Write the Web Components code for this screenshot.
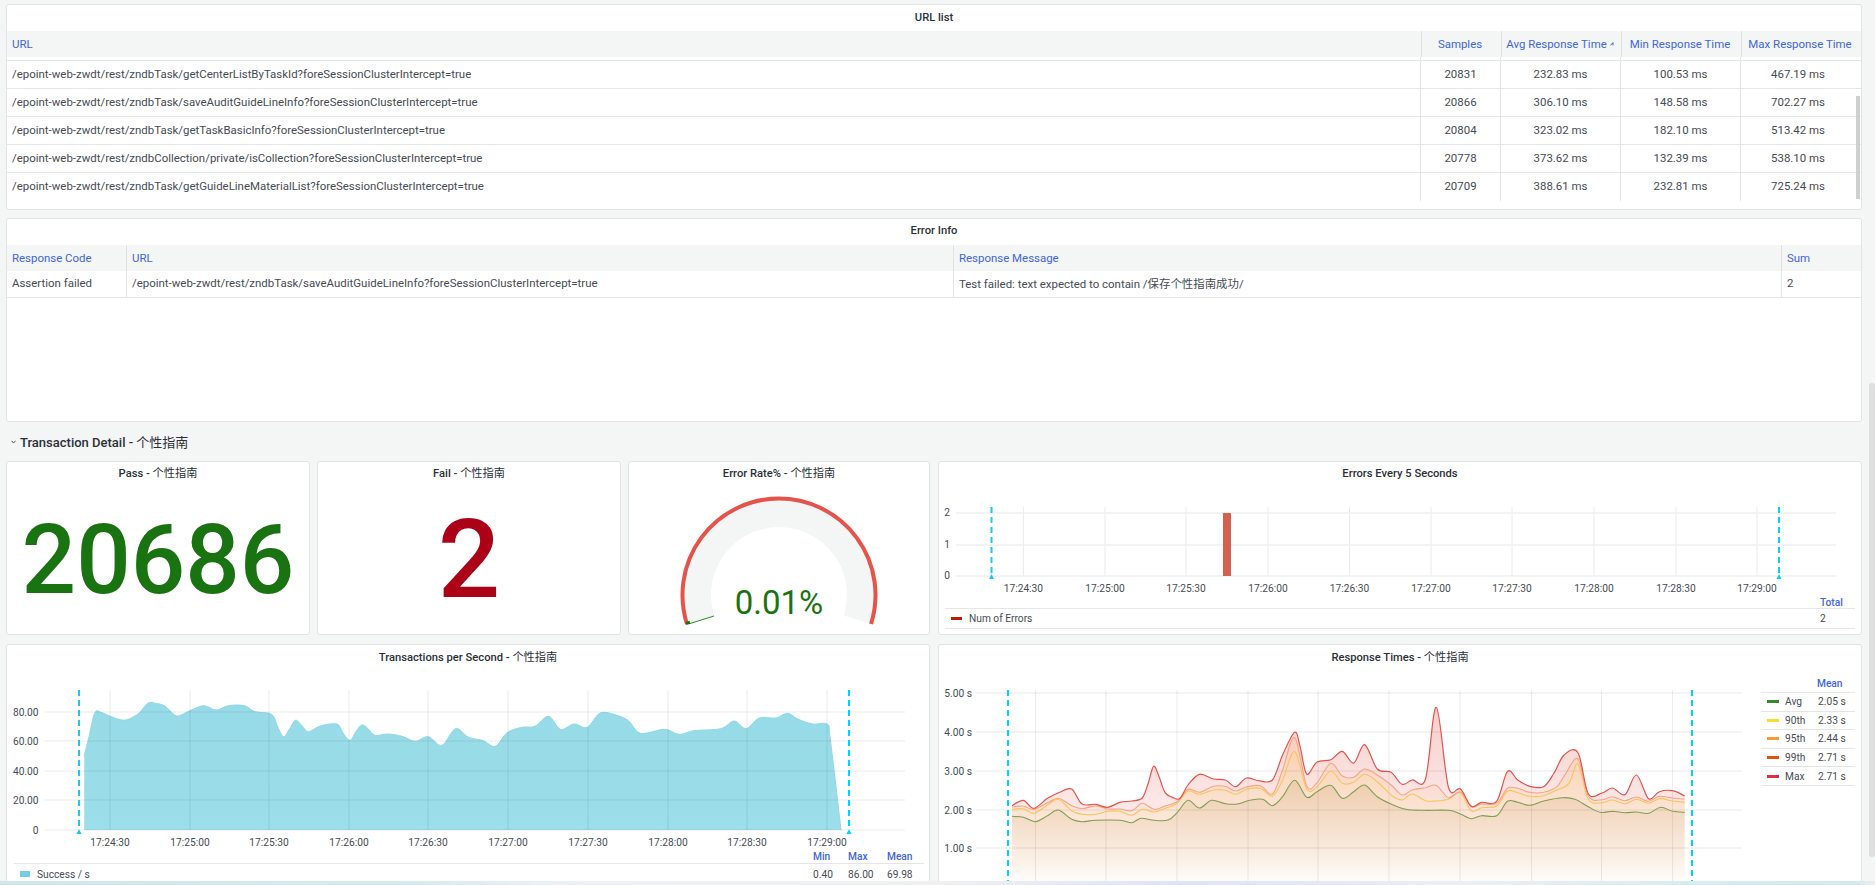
<!DOCTYPE html>
<html lang="en">
<head>
<meta charset="utf-8">
<title>Transaction Detail</title>
<style>
html,body{margin:0;padding:0;height:885px;overflow:hidden;background:#f4f5f5}
body{font-family:Roboto,"Noto Sans CJK SC",sans-serif}
</style>
</head>
<body>
<x-dashboard></x-dashboard>
<script>
const FONT='Roboto,"Noto Sans CJK SC",sans-serif';
const LINK='#3f66e2', TXT='#464c54', LINE='#e3e5e6';
function mount(el,html){const r=el.attachShadow({mode:'open'});r.innerHTML=html;return r;}
function smooth(p){
  let d=`M${p[0][0].toFixed(1)} ${p[0][1].toFixed(1)}`;
  for(let i=0;i<p.length-1;i++){
    const a=p[i-1]||p[i],b=p[i],c=p[i+1],e=p[i+2]||c;
    const c1=[b[0]+(c[0]-a[0])/6,b[1]+(c[1]-a[1])/6],c2=[c[0]-(e[0]-b[0])/6,c[1]-(e[1]-b[1])/6];
    d+=`C${c1[0].toFixed(1)} ${c1[1].toFixed(1)} ${c2[0].toFixed(1)} ${c2[1].toFixed(1)} ${c[0].toFixed(1)} ${c[1].toFixed(1)}`;
  }
  return d;
}
function pts(str,ox,sx){
  return str.trim().split(/\s*;\s*/).map(s=>{const [x,y]=s.split(',').map(Number);return [ox+x/sx,640+y/3];});
}
function area(p,base){return smooth(p)+`L${p[p.length-1][0].toFixed(1)} ${base}L${p[0][0].toFixed(1)} ${base}Z`;}
const TIMES=['17:24:30','17:25:00','17:25:30','17:26:00','17:26:30','17:27:00','17:27:30','17:28:00','17:28:30','17:29:00'];
const svgStyle=`svg{display:block}text{font:10.2px ${FONT};fill:${TXT}}`;
function dash(x,y1,y2,tri){
  return `<line x1="${x}" x2="${x}" y1="${y1}" y2="${y2}" stroke="#00d3ff" stroke-width="2" stroke-dasharray="6 4"/>`+
   (tri?`<path d="M${x-2.5} ${y2+5}L${x} ${y2}L${x+2.5} ${y2+5}Z" fill="#00d3ff"/>`:'');
}

class XPanel extends HTMLElement{
  connectedCallback(){
    if(this.shadowRoot)return;
    const t=(this.getAttribute('heading')||'').replace(/([\u4e00-\u9fff]+)/g,'<span>$1</span>');
    mount(this,`<style>
      :host{display:flex;flex-direction:column;box-sizing:border-box;background:#fff;border:1px solid #e1e3e4;border-radius:3px;overflow:hidden;min-width:0;position:relative;font-family:${FONT}}
      header{flex:none;height:var(--title-h,26px);box-sizing:border-box;padding-top:var(--title-pad,0);line-height:24px;text-align:center;font-size:11.2px;font-weight:500;color:#2b3038;white-space:nowrap}
      header span{font-weight:400}
      .b{flex:1;min-height:0;display:flex;flex-direction:column}
    </style><header>${t}</header><div class="b"><slot></slot></div>`);
  }
}
customElements.define('x-panel',XPanel);

class XTable extends HTMLElement{
  connectedCallback(){
    if(this.shadowRoot)return;
    const d=JSON.parse(this.getAttribute('data'));
    const cell=(t,c)=>`<div class="c ${c}">${t}</div>`;
    const arrow=`<svg width="4" height="4" viewBox="0 0 4 4" style="margin-left:3px;vertical-align:3px"><path d="M.4 3.4L3 .6V3.4" fill="none" stroke="${LINK}"/></svg>`;
    let h=`<div class="row head" style="grid-template-columns:${d.cols}">`+d.head.map((t,i)=>cell(t+(d.sort===i?arrow:''),d.center&&i>0?'m':'')).join('')+`</div>`;
    let b='';
    if(d.spacer)b+=`<div class="row sp" style="grid-template-columns:${d.bodyCols}">`+d.head.map(()=>`<div class="c"></div>`).join('')+`</div>`;
    d.rows.forEach((r,n)=>{
      b+=`<div class="row tr ${n===d.rows.length-1&&d.spacer?'last':''}" style="grid-template-columns:${d.bodyCols};height:${d.rowH}px">`+r.map((t,i)=>cell(t,d.center&&i>0?'m':'')).join('')+`</div>`;
    });
    mount(this,`<style>
      :host{display:block;position:relative;font-size:11.45px;color:${TXT};font-family:${FONT}}
      .row{display:grid}
      .c{box-sizing:border-box;padding:0 5px;white-space:nowrap;overflow:hidden;display:flex;align-items:center;height:100%}
      .c+.c{border-left:1px solid ${LINE}}
      .m{justify-content:center;padding:0 1px}
      .head{height:26px;background:#f4f5f5;color:${LINK}}
      .head .c{padding-bottom:1px}
      .head .m{padding-right:4px}
      .head .c+.c{border-left-color:#dfe1e2}
      .sp{height:3px;border-bottom:1px solid ${LINE}}
      .tr{box-sizing:border-box;border-bottom:1px solid ${LINE}}
      .tr .c{padding-bottom:2px}
      .last{border-bottom:0}
      .bar{position:absolute;right:1px;top:65px;width:4px;height:103px;background:#cfcfcf}
    </style>${h}${b}${d.spacer?'<div class="bar"></div>':''}`);
  }
}
customElements.define('x-table',XTable);

class XStat extends HTMLElement{
  connectedCallback(){
    if(this.shadowRoot)return;
    mount(this,`<style>
      :host{display:flex;flex:1;align-items:center;justify-content:center;font-family:${FONT};font-weight:500;line-height:1;
        font-size:${this.getAttribute('size')}px;color:${this.getAttribute('color')}}
    </style><slot></slot>`);
  }
}
customElements.define('x-stat',XStat);

class XGauge extends HTMLElement{
  connectedCallback(){
    if(this.shadowRoot)return;
    const cx=779,cy=595,a=17.5*Math.PI/180;
    const arc=r=>{const dx=r*Math.cos(a),dy=r*Math.sin(a);return `M${cx-dx} ${cy+dy}A${r} ${r} 0 1 1 ${cx+dx} ${cy+dy}`;};
    mount(this,`<style>:host{display:block}svg{display:block}text{font:33px ${FONT};fill:#1a7311}</style>
    <svg width="300" height="148" viewBox="629 486 300 148">
      <path d="${arc(82)}" fill="none" stroke="#f4f5f5" stroke-width="28"/>
      <path d="${arc(96.5)}" fill="none" stroke="#e5534b" stroke-width="4"/>
      <path d="M${cx-96.5*Math.cos(a)-1.5} ${cy+96.5*Math.sin(a)-2}l4 -1.2l1 3l-4 1.2z" fill="#1a7311"/>
      <line x1="690" y1="623.5" x2="714" y2="616" stroke="#2d8a22" stroke-width="1"/>
      <text x="779" y="614" text-anchor="middle">0.01%</text>
    </svg>`);
  }
}
customElements.define('x-gauge',XGauge);

class XLegend extends HTMLElement{
  connectedCallback(){
    if(this.shadowRoot)return;
    const d=JSON.parse(this.getAttribute('data'));
    const vals=d.values.map(v=>`<span>${v}</span>`).join('');
    const hd=d.head.map(v=>`<span>${v}</span>`).join('');
    mount(this,`<style>
      :host{display:block;padding:0 ${d.padR}px 0 ${d.padL}px;font:10.2px ${FONT};color:${TXT}}
      .r{display:grid;grid-template-columns:1fr ${d.cols};align-items:center;box-sizing:border-box}
      .h{height:${d.headH}px;color:${LINK};border-bottom:1px solid ${LINE};font-weight:500;padding-top:2px}
      .v{height:${d.rowH}px;${d.closed?`border-bottom:1px solid ${LINE};`:''}}
      .n{display:flex;align-items:center;gap:7px;padding-left:6px}
      i{display:block;width:${d.sw[0]}px;height:${d.sw[1]}px;background:${d.color}}
    </style>
    <div class="r h"><span></span>${hd}</div>
    <div class="r v"><span class="n"><i></i>${d.name}</span>${vals}</div>`);
  }
}
customElements.define('x-legend',XLegend);

class XSideLegend extends HTMLElement{
  connectedCallback(){
    if(this.shadowRoot)return;
    const d=JSON.parse(this.getAttribute('data'));
    const rows=d.map(r=>`<div class="r"><i style="background:${r[1]}"></i><span>${r[0]}</span><span>${r[2]}</span></div>`).join('');
    mount(this,`<style>
      :host{display:block;flex:none;width:94px;margin-left:6px;font:10.2px ${FONT};color:${TXT}}
      .h{height:24px;box-sizing:border-box;padding:8px 0 0 56px;color:${LINK};font-weight:500;border-bottom:1px solid ${LINE};line-height:14px}
      .r{display:grid;grid-template-columns:18px 33px 1fr;align-items:center;height:18.6px;box-sizing:border-box;border-bottom:1px solid ${LINE};padding-left:6px}
      i{display:block;width:12px;height:3px}
    </style><div class="h">Mean</div>${rows}`);
  }
}
customElements.define('x-side-legend',XSideLegend);

class XErrorsChart extends HTMLElement{
  connectedCallback(){
    if(this.shadowRoot)return;
    const V=[1023.4,1105,1186,1268,1349.5,1431,1512,1594,1676,1757];
    const Y=[[513,'2'],[545,'1'],[576,'0']];
    mount(this,`<style>:host{display:block}${svgStyle}</style>
    <svg width="922" height="108" viewBox="939 486 922 108">
      ${V.map((x,i)=>`<line x1="${x}" x2="${x}" y1="507" y2="576" stroke="#e9eaeb"/><text x="${x}" y="592" text-anchor="middle">${TIMES[i]}</text>`).join('')}
      ${Y.map(([y,t])=>`<line x1="956" x2="1836" y1="${y}" y2="${y}" stroke="#eeeff0" stroke-width="1.6"/><text x="950" y="${y+3}" text-anchor="end">${t}</text>`).join('')}
      <rect x="1223" y="513" width="8" height="63" fill="#d4614e"/>
      ${dash(991.5,507,574,true)}${dash(1779,507,574,true)}
    </svg>`);
  }
}
customElements.define('x-errors-chart',XErrorsChart);

class XTpsChart extends HTMLElement{
  connectedCallback(){
    if(this.shadowRoot)return;
    const V=[110,190,269,349,428,508,588,668,747,827];
    const Y=[[712,'80.00'],[741,'60.00'],[771,'40.00'],[800,'20.00'],[830,'0']];
    const p=pts(`142,348;150,290;160,218;170,217;185,228;200,238;212,240;225,230;235,218;250,189;262,190;278,198;295,226;305,225;320,212;340,198;350,200;365,210;385,197;412,197;430,215;458,223;468,260;478,290;487,270;498,241;508,255;520,275;540,258;568,252;578,278;590,301;600,275;610,255;620,265;632,286;655,282;680,290;700,304;722,290;745,316;768,266;790,292;815,302;835,319;855,278;880,262;902,259;925,229;945,268;968,252;990,262;1012,219;1040,226;1060,243;1080,280;1120,268;1145,283;1170,272;1215,266;1238,243;1258,266;1280,234;1308,234;1328,220;1345,237;1370,252;1395,253;1400,300;1418,570`,0,1.686);
    mount(this,`<style>:host{display:block}${svgStyle}</style>
    <svg width="922" height="178" viewBox="7 669 922 178">
      <defs><linearGradient id="t" gradientUnits="userSpaceOnUse" x1="0" x2="0" y1="690" y2="830"><stop offset="0" stop-color="#95dae7"/><stop offset="1" stop-color="#9cdee9"/></linearGradient></defs>
      <path d="${area(p,830)}" fill="url(#t)"/>
      <path d="${smooth(p)}" fill="none" stroke="#8ed8e5" stroke-width="1"/>
      ${V.map((x,i)=>`<line x1="${x}" x2="${x}" y1="690" y2="830" stroke="#000" stroke-opacity=".08"/><text x="${x}" y="846" text-anchor="middle">${TIMES[i]}</text>`).join('')}
      ${Y.map(([y,t])=>`<line x1="44.5" x2="905" y1="${y}" y2="${y}" stroke="#000" stroke-opacity=".08" stroke-width="1.2"/><text x="38.5" y="${y+3.5}" text-anchor="end">${t}</text>`).join('')}
      ${dash(79,690,829,true)}${dash(849,690,829,true)}
    </svg>`);
  }
}
customElements.define('x-tps-chart',XTpsChart);

class XRtChart extends HTMLElement{
  connectedCallback(){
    if(this.shadowRoot)return;
    const V=[1035.5,1106,1177,1248,1318,1389,1460,1531.5,1601.5,1672.6];
    const Y=[[693,'5.00 s'],[732,'4.00 s'],[771,'3.00 s'],[810,'2.00 s'],[848,'1.00 s']];
    const O=930,S=1.659;
    const mx=pts(`136,497;155,481;172,505;195,475;215,457;235,447;252,492;275,493;295,502;315,487;335,483;352,474;362,430;371,379;380,410;390,458;405,474;415,475;428,435;447,403;470,417;490,420;507,440;525,414;545,422;568,420;585,345;605,277;614,320;625,402;642,366;665,359;684,334;703,369;721,314;742,387;765,397;783,433;800,420;822,417;840,202;860,441;880,447;898,499;915,487;940,484;958,394;975,420;995,439;1018,440;1035,400;1052,345;1075,338;1092,461;1115,459;1132,444;1153,464;1172,405;1192,476;1210,455;1232,452;1252,468`,O,S);
    const p95=pts(`136,501;155,498;172,508;195,488;213,475;235,497;252,506;275,498;295,507;315,507;335,512;352,490;372,508;390,498;410,485;428,448;447,457;470,439;490,439;507,453;525,441;548,437;568,462;585,390;605,293;625,438;642,428;665,370;684,408;703,412;721,387;742,405;765,435;783,465;800,450;822,443;840,436;860,473;880,456;898,500;915,492;940,490;958,445;975,445;995,457;1018,457;1040,440;1055,400;1075,357;1092,468;1115,479;1132,470;1153,482;1172,471;1192,484;1210,469;1232,474;1252,478`,O,S);
    const p90=pts(`136,508;155,506;172,520;195,495;213,478;235,512;252,523;275,523;295,514;315,514;335,526;352,508;372,516;390,505;410,490;428,453;447,463;470,450;490,451;507,463;525,448;548,445;568,468;585,420;605,335;625,447;642,440;665,393;684,430;703,427;721,403;742,425;765,465;783,480;800,462;822,482;840,483;860,478;880,458;898,513;915,503;940,498;958,453;975,458;995,469;1018,467;1040,450;1060,430;1075,372;1092,478;1115,488;1132,480;1153,491;1172,478;1192,490;1210,476;1232,483;1252,487`,O,S);
    const avg=pts(`136,529;155,532;175,545;195,527;213,510;235,538;252,545;275,541;315,541;335,548;350,535;372,541;395,540;410,518;428,481;447,504;467,481;490,491;510,492;530,481;552,478;568,497;585,470;605,421;625,472;642,455;665,436;684,475;703,455;721,435;742,470;765,492;790,508;820,511;860,511;880,522;898,536;915,527;940,527;958,484;975,487;995,496;1020,482;1050,473;1070,478;1092,500;1112,517;1132,514;1153,518;1172,516;1192,520;1212,502;1232,514;1252,517`,O,S);
    const grad=(id,c,a)=>`<linearGradient id="${id}" gradientUnits="userSpaceOnUse" x1="0" x2="0" y1="693" y2="887"><stop offset="0" stop-color="${c}" stop-opacity="${a}"/><stop offset="1" stop-color="${c}" stop-opacity="0"/></linearGradient>`;
    mount(this,`<style>:host{display:block;flex:none}${svgStyle}</style>
    <svg width="816" height="216" viewBox="939 669 816 216">
      <defs>${grad('gr','#e24d42',.3)}${grad('go','#ff9830',.17)}${grad('gy','#fade2a',.13)}${grad('ga','#b4823c',.3)}</defs>
      <path d="${area(mx,887)}" fill="url(#gr)"/>
      <path d="${area(p95,887)}" fill="url(#go)"/>
      <path d="${area(p90,887)}" fill="url(#gy)"/>
      <path d="${area(avg,887)}" fill="url(#ga)"/>
      ${V.map(x=>`<line x1="${x}" x2="${x}" y1="690" y2="887" stroke="#000" stroke-opacity=".08"/>`).join('')}
      ${Y.map(([y,t])=>`<line x1="976" x2="1742" y1="${y}" y2="${y}" stroke="#000" stroke-opacity=".09" stroke-width="1.2"/><text x="972" y="${y+3.5}" text-anchor="end">${t}</text>`).join('')}
      <path d="${smooth(avg)}" fill="none" stroke="#7f9d55" stroke-width="1.1"/>
      <path d="${smooth(p90)}" fill="none" stroke="#f6c658" stroke-width="1.1"/>
      <path d="${smooth(p95)}" fill="none" stroke="#f7a383" stroke-width="1.1"/>
      <path d="${smooth(mx)}" fill="none" stroke="#e5534b" stroke-width="1.2"/>
      ${dash(1008,690,885,false)}${dash(1692,690,885,false)}
    </svg>`);
  }
}
customElements.define('x-rt-chart',XRtChart);

class XRow extends HTMLElement{
  connectedCallback(){
    if(this.shadowRoot)return;
    mount(this,`<style>
      :host{display:flex;flex:none;align-items:center;gap:4px;height:39px;padding-left:5px;font:500 13px ${FONT};color:#2b3038}
      svg{display:block;margin-top:1px}
      ::slotted(span){font-weight:400}
    </style><svg width="5" height="4" viewBox="0 0 5 4"><path d="M.5 .8L2.5 3L4.5 .8" fill="none" stroke="#464c54" stroke-width="1"/></svg><div><slot></slot></div>`);
  }
}
customElements.define('x-row',XRow);

const urlTable={
  cols:'1414px 80px 120px 120px 120px',bodyCols:'1413px 80px 120px 120px 115px',center:true,sort:2,spacer:true,rowH:28,
  head:['URL','Samples','Avg Response Time','Min Response Time','Max Response Time'],
  rows:[
   ['/epoint-web-zwdt/rest/zndbTask/getCenterListByTaskId?foreSessionClusterIntercept=true','20831','232.83 ms','100.53 ms','467.19 ms'],
   ['/epoint-web-zwdt/rest/zndbTask/saveAuditGuideLineInfo?foreSessionClusterIntercept=true','20866','306.10 ms','148.58 ms','702.27 ms'],
   ['/epoint-web-zwdt/rest/zndbTask/getTaskBasicInfo?foreSessionClusterIntercept=true','20804','323.02 ms','182.10 ms','513.42 ms'],
   ['/epoint-web-zwdt/rest/zndbCollection/private/isCollection?foreSessionClusterIntercept=true','20778','373.62 ms','132.39 ms','538.10 ms'],
   ['/epoint-web-zwdt/rest/zndbTask/getGuideLineMaterialList?foreSessionClusterIntercept=true','20709','388.61 ms','232.81 ms','725.24 ms']
  ]};
const errTable={
  cols:'119px 827px 828px 80px',bodyCols:'119px 827px 828px 80px',rowH:27,
  head:['Response Code','URL','Response Message','Sum'],
  rows:[['Assertion failed','/epoint-web-zwdt/rest/zndbTask/saveAuditGuideLineInfo?foreSessionClusterIntercept=true','Test failed: text expected to contain /保存个性指南成功/','2']]};
const errLegend={padL:6,padR:6,cols:'35px',head:['Total'],values:['2'],name:'Num of Errors',color:'#bf1b00',sw:[11,3],headH:15,rowH:19.5,closed:true};
const tpsLegend={padL:7,padR:5,cols:'35px 39px 37px',head:['Min','Max','Mean'],values:['0.40','86.00','69.98'],name:'Success / s',color:'#73cfdf',sw:[10,6],headH:17,rowH:20,closed:false};
const rtLegend=[['Avg','#37872d','2.05 s'],['90th','#fade2a','2.33 s'],['95th','#ff9830','2.44 s'],['99th','#e0540b','2.71 s'],['Max','#e02f44','2.71 s']];
const attr=o=>JSON.stringify(o).replace(/&/g,'&amp;').replace(/'/g,'&#39;');

class XDashboard extends HTMLElement{
  connectedCallback(){
    if(this.shadowRoot)return;
    mount(this,`<style>
      :host{display:block;position:relative;width:1875px;height:885px;overflow:hidden;background:#f4f5f5;font-family:${FONT}}
      .page{display:flex;flex-direction:column;padding:4px 13px 0 6px;box-sizing:border-box;height:885px}
      .url{flex:none;height:206px;margin-bottom:8px;--title-pad:1px}
      .err{flex:none;height:204px}
      .stats{flex:none;display:grid;grid-template-columns:304px 304px 302px 925px;column-gap:7px;height:174px;margin-bottom:9px}
      .wide{margin-left:1px}
      .charts{flex:none;display:grid;grid-template-columns:924px 924px;gap:8px;height:260px}
      .chart{--title-h:24px;--title-pad:0}
      .b2{--title-h:24px;--title-pad:1px}
      .rt{display:flex}
      .sb{position:absolute;right:0;top:383px;width:6.5px;height:474px;background:#dfdfdf;border-radius:3px}
      .hb{position:absolute;left:0;right:0;bottom:0;height:4px;background:linear-gradient(90deg,#cfe6ea 0,#d6ebee 22%,#eef1f4 30%,#f0f0f0 50%,#dfe4f8 62%,#e6e8f6 72%,#eceff1 78%,#d8ecef 90%,#d2eaee 99%,#eee 100%)}
    </style>
    <div class="page">
      <x-panel class="url" heading="URL list"><x-table data='${attr(urlTable)}'></x-table></x-panel>
      <x-panel class="err" heading="Error Info"><x-table data='${attr(errTable)}'></x-table></x-panel>
      <x-row>Transaction Detail - <span>个性指南</span></x-row>
      <div class="stats">
        <x-panel class="chart" heading="Pass - 个性指南"><x-stat size="96" color="#1a7311">20686</x-stat></x-panel>
        <x-panel class="chart" heading="Fail - 个性指南"><x-stat size="110" color="#ab0218">2</x-stat></x-panel>
        <x-panel class="chart" heading="Error Rate% - 个性指南"><x-gauge></x-gauge></x-panel>
        <x-panel class="chart wide" heading="Errors Every 5 Seconds"><x-errors-chart></x-errors-chart><x-legend data='${attr(errLegend)}'></x-legend></x-panel>
      </div>
      <div class="charts">
        <x-panel class="b2" heading="Transactions per Second - 个性指南"><x-tps-chart></x-tps-chart><x-legend data='${attr(tpsLegend)}'></x-legend></x-panel>
        <x-panel class="b2" heading="Response Times - 个性指南"><div class="rt"><x-rt-chart></x-rt-chart><x-side-legend data='${attr(rtLegend)}'></x-side-legend></div></x-panel>
      </div>
    </div>
    <div class="sb"></div><div class="hb"></div>`);
  }
}
customElements.define('x-dashboard',XDashboard);
</script>
</body>
</html>
